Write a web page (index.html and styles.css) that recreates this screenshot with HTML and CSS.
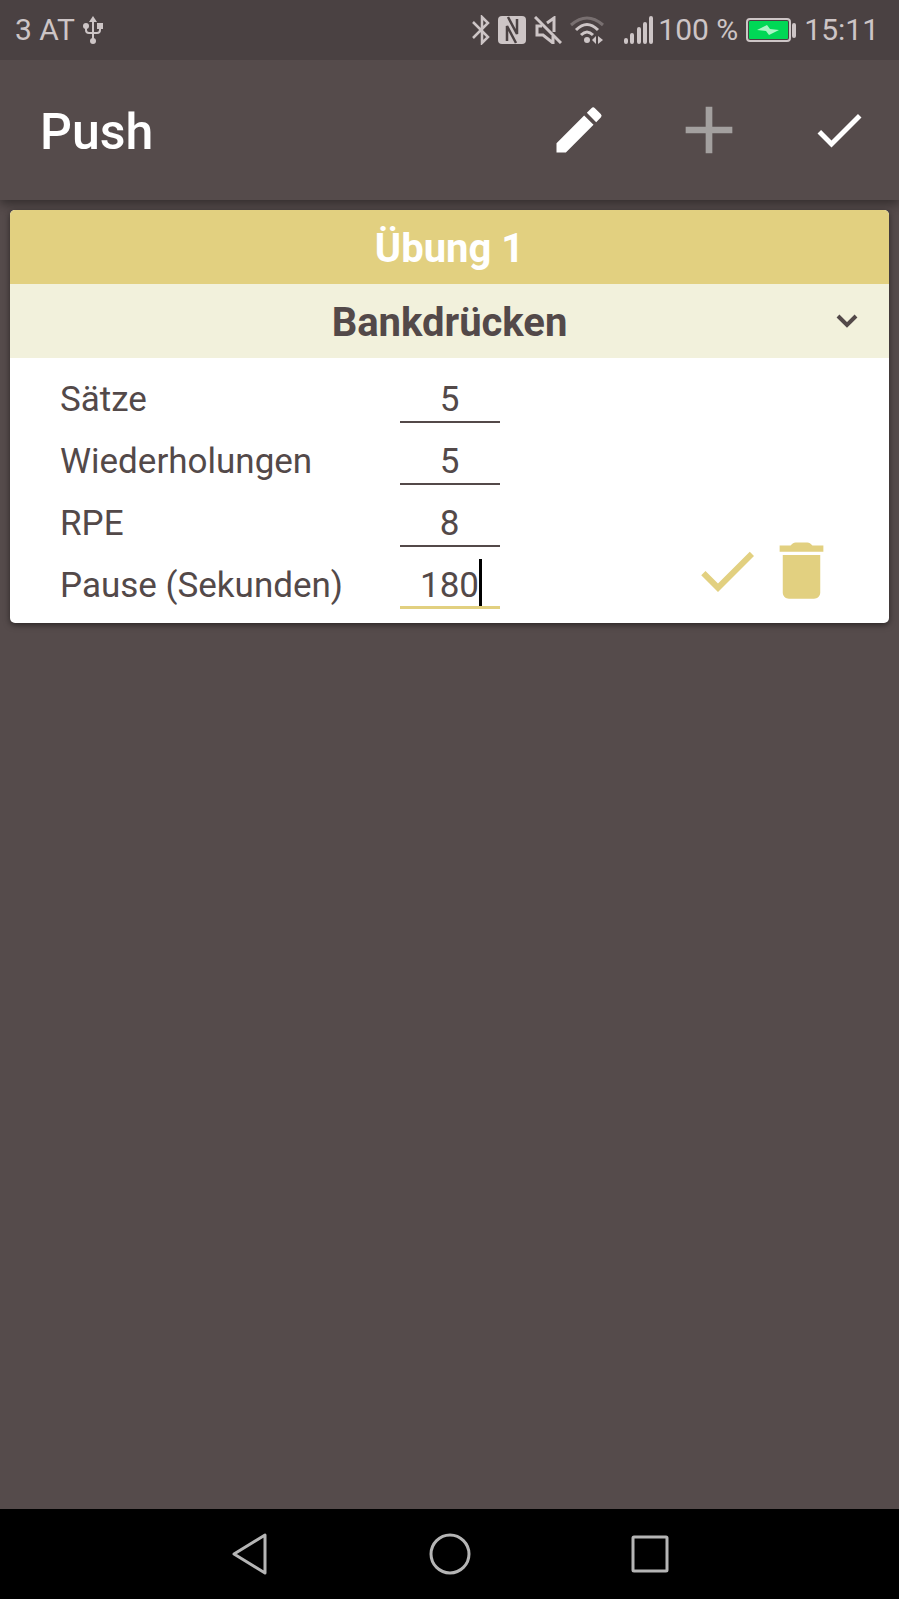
FILE: index.html
```html
<!DOCTYPE html>
<html lang="de">
<head>
<meta charset="utf-8">
<meta name="viewport" content="width=device-width, initial-scale=1">
<title>Push</title>
<link rel="stylesheet" href="styles.css">
</head>
<body>
<div class="status">
  <span>3 AT</span>
  <svg class="usb" width="20" height="28" viewBox="0 0 20 28" fill="none" stroke="currentColor" stroke-width="2"><path d="M10 4v20M3 9v5q0 3 3 3h8q3 0 3-3V9"/><g fill="currentColor" stroke="none"><path d="M10 0l4 6H6z"/><circle cx="3" cy="10" r="3"/><path d="M14 7h6v6h-6z"/><circle cx="10" cy="25" r="3"/></g></svg>
  <div class="status-icons">
    <svg width="18" height="30" viewBox="0 0 18 30" fill="none" stroke="currentColor" stroke-width="2.5"><path d="M1 7l15 15-6 6V2l6 6L1 23"/></svg>
    <svg width="28" height="28" viewBox="0 0 28 28" fill="none"><rect width="28" height="28" rx="4" fill="currentColor"/><path d="M10 1l9 17V3M18 27L9 10v15" stroke="#4a4142" stroke-width="2.5"/></svg>
    <svg width="28" height="28" viewBox="0 0 28 28" fill="none" stroke="currentColor" stroke-width="3"><path d="M1 1l26 26"/><path d="M8 10H3v9h6l10 8v-7M13 7l7-5v14"/></svg>
    <svg width="34" height="28" viewBox="0 0 34 28" fill="none" stroke="currentColor" stroke-width="3"><path d="M1 9Q17-5 33 9" opacity=".35"/><path d="M6 14q11-11 22 0M11 19q6-6 12 0"/><g fill="currentColor" stroke="none"><circle cx="17" cy="24" r="3"/><path d="M26 20v8l-4-4zM28 20v8l5-4z"/></g></svg>
    <svg class="signal" width="30" height="28" viewBox="0 0 30 28" stroke="currentColor" stroke-width="4" stroke-linecap="round"><path d="M2 24v2M8 19v7M15 13v13M21 8v18M27 2v24"/></svg>
    <span>100 %</span>
    <svg width="50" height="24" viewBox="0 0 50 24"><rect x="1" y="1" width="43" height="22" rx="3" fill="none" stroke="currentColor" stroke-width="2"/><rect x="3" y="3" width="39" height="18" rx="1" fill="#00d856"/><path d="M11 12l10-5 3 4 9 1-10 5-3-4z" fill="#a8f5c5"/><path d="M48 7v11" stroke="currentColor" stroke-width="4" stroke-linecap="round"/></svg>
    <time>15:11</time>
  </div>
</div>

<header class="toolbar">
  <h1 class="title">Push</h1>
  <button class="tool" type="button" aria-label="Bearbeiten"><svg width="60" height="60" viewBox="0 0 24 24" fill="currentColor"><path d="M3 17.25V21h3.75L17.81 9.94l-3.75-3.75zM20.71 7.04a1 1 0 0 0 0-1.41l-2.34-2.34a1 1 0 0 0-1.41 0l-1.83 1.83 3.75 3.75z"/></svg></button>
  <button class="tool tool-muted" type="button" aria-label="Hinzufügen"><svg width="80" height="80" viewBox="0 0 24 24" fill="currentColor"><path d="M19 13h-6v6h-2v-6H5v-2h6V5h2v6h6z"/></svg></button>
  <button class="tool" type="button" aria-label="Fertig"><svg width="60" height="60" viewBox="0 0 24 24" fill="currentColor"><path d="M9 16.17L4.83 12l-1.42 1.41L9 19 21 7l-1.41-1.41z"/></svg></button>
</header>

<main class="content">
  <form class="card">
    <h2 class="card-title">Übung 1</h2>
    <div class="exercise">
      <select class="exercise-select" aria-label="Übung"><option>Bankdrücken</option></select>
      <svg class="chevron" width="24" height="16" viewBox="0 0 24 16" fill="none" stroke="currentColor" stroke-width="4"><path d="M3 3l9 9 9-9"/></svg>
    </div>
    <div class="fields">
      <label for="sets">Sätze</label>
      <div class="field"><input id="sets" type="text" inputmode="numeric" value="5"></div>
      <label for="reps">Wiederholungen</label>
      <div class="field"><input id="reps" type="text" inputmode="numeric" value="5"></div>
      <label for="rpe">RPE</label>
      <div class="field"><input id="rpe" type="text" inputmode="numeric" value="8"></div>
      <label for="rest">Pause (Sekunden)</label>
      <div class="field field-active"><input id="rest" type="text" inputmode="numeric" value="180"><span class="caret"></span></div>
      <div class="actions">
        <button class="action" type="button" aria-label="Speichern"><svg width="72" height="72" viewBox="0 0 24 24" fill="currentColor"><path d="M9 16.17L4.83 12l-1.42 1.41L9 19 21 7l-1.41-1.41z"/></svg></button>
        <button class="action" type="button" aria-label="Löschen"><svg width="75" height="75" viewBox="0 0 24 24" fill="currentColor"><path d="M6 19c0 1.1.9 2 2 2h8c1.1 0 2-.9 2-2V7H6zM19 4h-3.5c-.6-.7-1-1-1.6-1h-3.8c-.6 0-1 .3-1.6 1H5v2h14z"/></svg></button>
      </div>
    </div>
  </form>
</main>

<nav class="navbar">
  <button class="nav-button" type="button" aria-label="Zurück"><svg width="44" height="44" viewBox="0 0 44 44"><path d="M6 22L37 3v38z"/></svg></button>
  <button class="nav-button" type="button" aria-label="Startseite"><svg width="44" height="44" viewBox="0 0 44 44"><circle cx="22" cy="22" r="19"/></svg></button>
  <button class="nav-button" type="button" aria-label="Übersicht"><svg width="44" height="44" viewBox="0 0 44 44"><rect x="5" y="5" width="34" height="34" rx="1"/></svg></button>
</nav>
</body>
</html>
```

FILE: styles.css
```css
* {
  box-sizing: border-box;
}

body {
  margin: 0;
  min-height: 100vh;
  display: flex;
  flex-direction: column;
  background: #554b4b;
  color: #534949;
  font-family: Roboto, "Liberation Sans", sans-serif;
}

svg {
  display: block;
  flex: none;
}

button {
  padding: 0;
  border: 0;
  background: none;
  color: inherit;
  display: grid;
  place-items: center;
}

.status {
  height: 60px;
  padding: 0 20px 0 15px;
  display: flex;
  align-items: center;
  background: #4a4142;
  color: #cdc5c6;
  font-size: 30px;
  line-height: 36px;
  white-space: nowrap;
}

.usb {
  margin-left: 8px;
}

.status-icons {
  margin-left: auto;
  display: flex;
  align-items: center;
  gap: 8px;
}

.signal {
  margin: 0 -4px 0 12px;
}

.toolbar {
  height: 140px;
  padding-left: 40px;
  display: flex;
  align-items: center;
  gap: 10px;
  background: #554b4b;
  color: #fff;
  box-shadow: 0 4px 10px rgba(0, 0, 0, 0.4);
  clip-path: inset(0 0 -20px);
}

.title {
  margin: 0 auto 0 0;
  padding-top: 4px;
  font-size: 50px;
  font-weight: 500;
  line-height: 60px;
}

.tool {
  width: 120px;
  height: 120px;
}

.tool-muted {
  color: #a3a09f;
}

.content {
  flex: 1;
  padding: 10px;
}

.card {
  position: relative;
  overflow: hidden;
  border-radius: 5px;
  background: #fff;
  box-shadow: 0 2px 6px rgba(0, 0, 0, 0.5);
}

.card-title {
  margin: 0;
  padding-top: 4px;
  background: #e2d080;
  color: #fff;
  font-size: 40px;
  font-weight: 700;
  line-height: 70px;
  text-align: center;
}

.exercise {
  position: relative;
  background: #f2f1dc;
}

.exercise-select {
  display: block;
  width: 100%;
  height: 74px;
  padding: 4px 0 0;
  border: 0;
  appearance: none;
  background: none;
  color: inherit;
  font: 700 40px/70px Roboto, "Liberation Sans", sans-serif;
  text-align: center;
  text-align-last: center;
}

.chevron {
  position: absolute;
  top: 29px;
  right: 30px;
  pointer-events: none;
}

.fields {
  padding: 11px 50px 6px;
  display: grid;
  grid-template-columns: 1fr 100px 1fr;
  grid-auto-rows: 62px;
  font-size: 35px;
  line-height: 62px;
}

.field {
  position: relative;
  grid-column: 2;
  height: 54px;
  border-bottom: 2px solid #534949;
}

.field-active {
  border-bottom: 3px solid #e2d080;
}

.field input {
  display: block;
  width: 100%;
  height: 62px;
  padding: 0;
  border: 0;
  outline: 0;
  background: none;
  color: inherit;
  font: inherit;
  text-align: center;
}

.caret {
  position: absolute;
  right: 18px;
  bottom: 0;
  width: 3px;
  height: 47px;
  background: #000;
}

.actions {
  grid-column: 3;
  grid-row: 1 / span 4;
  align-self: end;
  justify-self: end;
  display: flex;
  padding-bottom: 9px;
}

.action {
  width: 75px;
  height: 75px;
  color: #e2d080;
}

.navbar {
  height: 90px;
  display: flex;
  justify-content: center;
  background: #000;
  color: #b5b5b5;
}

.nav-button {
  width: 200px;
  height: 90px;
}

.nav-button svg {
  fill: none;
  stroke: currentColor;
  stroke-width: 3;
  stroke-linejoin: round;
}
```
